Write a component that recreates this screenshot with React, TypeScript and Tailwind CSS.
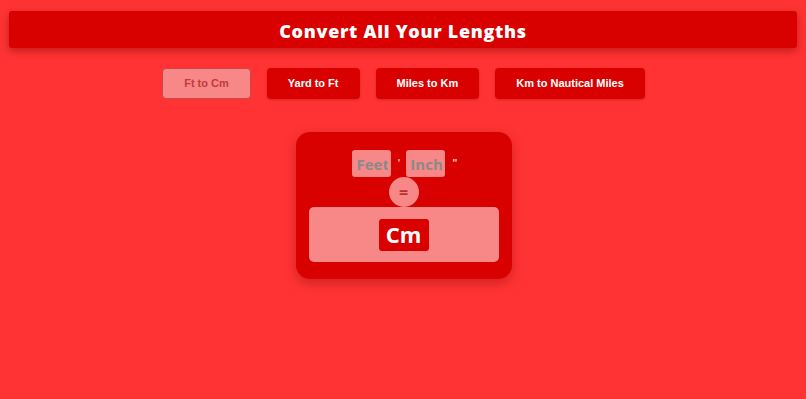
import React from 'react';

const tabs = ['Ft to Cm', 'Yard to Ft', 'Miles to Km', 'Km to Nautical Miles'];

const App: React.FC = () => {
  return (
    <div className="min-h-[399px] bg-[#ff3333] px-[9px] pt-[11px]" style={{ fontFamily: '"Liberation Sans", Arial, sans-serif' }}>
      <header className="flex h-[37px] items-center justify-center rounded-[3px] bg-[#d90000] pt-[3px] shadow-[0_3px_8px_rgba(120,0,0,0.45)]">
        <h1 className="text-[18px] font-extrabold tracking-[0.7px] text-white" style={{ fontFamily: '"Open Sans", sans-serif' }}>
          Convert All Your Lengths
        </h1>
      </header>

      <nav className="mt-[20px] flex justify-center gap-[16px] pl-[1px]">
        {tabs.map((t, i) => (
          <button
            key={t}
            className={
              i === 0
                ? 'h-[31px] rounded-[4px] border border-[#c84848] bg-[#f88888] px-[21px] text-[11px] font-bold text-[#c23a3a]'
                : 'h-[31px] rounded-[4px] bg-[#d90000] px-[21px] text-[11px] font-bold text-white shadow-[0_1px_3px_rgba(120,0,0,0.3)]'
            }
          >
            {t}
          </button>
        ))}
      </nav>

      <div className="mt-[33px] flex justify-center pl-[1px]">
        <div className="flex w-[216px] flex-col items-center rounded-[14px] bg-[#d90000] px-[13px] pb-[17px] pt-[18px] shadow-[0_4px_12px_rgba(120,0,0,0.35)]" style={{ fontFamily: '"Open Sans", sans-serif' }}>
          <div className="flex items-center pl-[3px]">
            <input
              placeholder="Feet"
              className="h-[27px] w-[39px] rounded-[3px] bg-[#f88888] pl-[4px] pr-[3px] text-[15px] font-bold text-[#888] outline-none placeholder:text-[#8a8a8a]"
            />
            <span className="mx-[6px] text-[11px] font-bold text-[#f8b0b0]">'</span>
            <input
              placeholder="Inch"
              className="h-[27px] w-[39px] rounded-[3px] bg-[#f88888] pl-[4px] pr-[3px] text-[15px] font-bold text-[#888] outline-none placeholder:text-[#8a8a8a]"
            />
            <span className="ml-[7px] text-[11px] font-bold text-[#f8d0d0]">"</span>
          </div>
          <div className="flex h-[30px] w-[30px] items-center justify-center rounded-full bg-[#f88888] text-[16px] font-bold text-[#b83030]">
            =
          </div>
          <div className="flex h-[55px] w-full items-center justify-center rounded-[5px] bg-[#f88888]">
            <span className="flex h-[32px] w-[50px] items-center justify-center rounded-[3px] bg-[#d90000] text-[22px] font-bold text-white">
              Cm
            </span>
          </div>
        </div>
      </div>
    </div>
  );
};

export default App;
